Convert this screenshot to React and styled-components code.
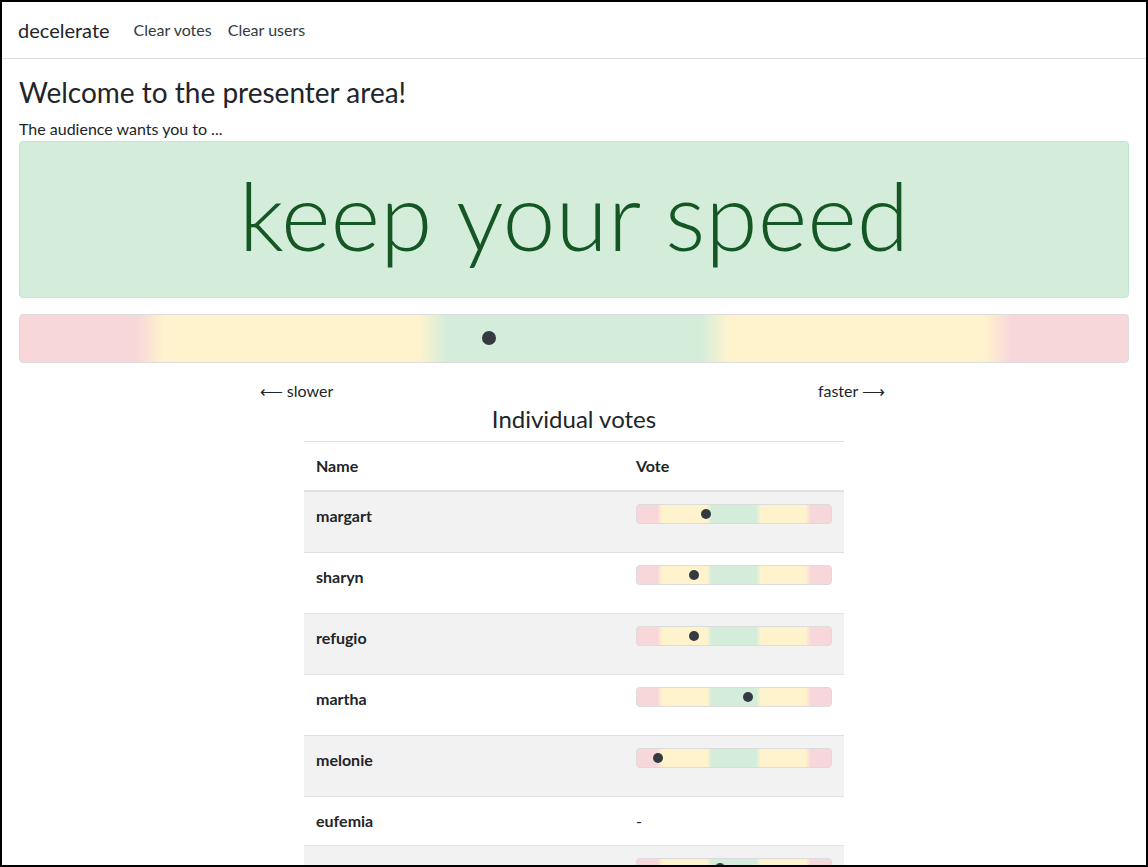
import React from "react";
import styled, { createGlobalStyle } from "styled-components";

// vote positions are percentages along the slow -> fast scale
const votes = [
  { name: "margart", vote: 35.7 },
  { name: "sharyn", vote: 29.6 },
  { name: "refugio", vote: 29.6 },
  { name: "martha", vote: 57 },
  { name: "melonie", vote: 10.7 },
  { name: "eufemia", vote: null },
  { name: "camilla", vote: 43 },
];

const average = 42.3;

const GlobalStyle = createGlobalStyle`
  * { box-sizing: border-box; }
  body {
    margin: 0;
    font-family: Lato, "Noto Sans", sans-serif;
    font-size: 16px;
    line-height: 1.5;
    color: #212529;
    background: #fff;
  }
`;

const Frame = styled.div`
  height: 100vh;
  border: 2px solid #000;
  overflow: hidden;
`;

const Navbar = styled.nav`
  display: flex;
  align-items: center;
  height: 57px;
  padding: 0 16px;
  border-bottom: 1px solid #dedede;
`;

const Brand = styled.a`
  font-size: 20px;
  color: #212529;
  margin-right: 16px;
  text-decoration: none;
`;

const NavLink = styled.a`
  padding: 8px;
  color: #343a40;
  text-decoration: none;
  cursor: pointer;
`;

const Container = styled.main`
  padding: 17px 17px 0;
`;

const Title = styled.h3`
  font-size: 28px;
  font-weight: 400;
  line-height: 1.2;
  margin: 0 0 7px;
`;

const Lead = styled.p`
  margin: 0;
`;

const Alert = styled.div`
  background: #d4edda;
  border: 1px solid #c3e6cb;
  border-radius: 4px;
  color: #155724;
  text-align: center;
  padding: 15px 20px 26px;
  margin-bottom: 16px;
`;

const Display = styled.h1`
  margin: 0;
  font-size: 95px;
  font-weight: 300;
  line-height: 1.2;
`;

const gradient = `linear-gradient(
  to right,
  #f8d7da 0%, #f8d7da 10.5%,
  #fff3cd 13%, #fff3cd 36%,
  #d4edda 38.5%, #d4edda 61.5%,
  #fff3cd 64%, #fff3cd 87%,
  #f8d7da 89.5%, #f8d7da 100%
)`;

const Scale = styled.div`
  position: relative;
  height: ${(p) => (p.small ? "20px" : "49px")};
  margin-bottom: 16px;
  border: 1px solid #dcdcdc;
  border-radius: 4px;
  background: ${gradient};
`;

const Dot = styled.span`
  position: absolute;
  top: 50%;
  width: ${(p) => (p.small ? "10px" : "14px")};
  height: ${(p) => (p.small ? "10px" : "14px")};
  border-radius: 50%;
  background: #343a40;
  transform: translate(-50%, -50%);
`;

const Directions = styled.div`
  display: grid;
  grid-template-columns: 1fr 1fr;
  text-align: center;
`;

const SubTitle = styled.h4`
  font-size: 24px;
  font-weight: 400;
  line-height: 1.2;
  text-align: center;
  margin: 2px 0 8px;
`;

const Table = styled.table`
  width: 540px;
  margin: 0 auto;
  border-collapse: collapse;

  th,
  td {
    padding: 12px;
    text-align: left;
    vertical-align: top;
    border-top: 1px solid #dee2e6;
  }
  thead th {
    border-bottom: 2px solid #dee2e6;
  }
  tbody tr:nth-child(odd) {
    background: rgba(0, 0, 0, 0.05);
  }
  tbody th {
    width: 320px;
  }
`;

const VoteScale = ({ value, small }) => (
  <Scale small={small}>
    <Dot small={small} style={{ left: `${value}%` }} />
  </Scale>
);

export default function App() {
  return (
    <>
      <GlobalStyle />
      <Frame>
        <Navbar>
          <Brand href="#">decelerate</Brand>
          <NavLink>Clear votes</NavLink>
          <NavLink>Clear users</NavLink>
        </Navbar>
        <Container>
          <Title>Welcome to the presenter area!</Title>
          <Lead>The audience wants you to ...</Lead>
          <Alert>
            <Display>keep your speed</Display>
          </Alert>
          <VoteScale value={average} />
          <Directions>
            <span>⟵ slower</span>
            <span>faster ⟶</span>
          </Directions>
          <SubTitle>Individual votes</SubTitle>
          <Table>
            <thead>
              <tr>
                <th>Name</th>
                <th>Vote</th>
              </tr>
            </thead>
            <tbody>
              {votes.map((v) => (
                <tr key={v.name}>
                  <th>{v.name}</th>
                  <td>
                    {v.vote === null ? "-" : <VoteScale small value={v.vote} />}
                  </td>
                </tr>
              ))}
            </tbody>
          </Table>
        </Container>
      </Frame>
    </>
  );
}
